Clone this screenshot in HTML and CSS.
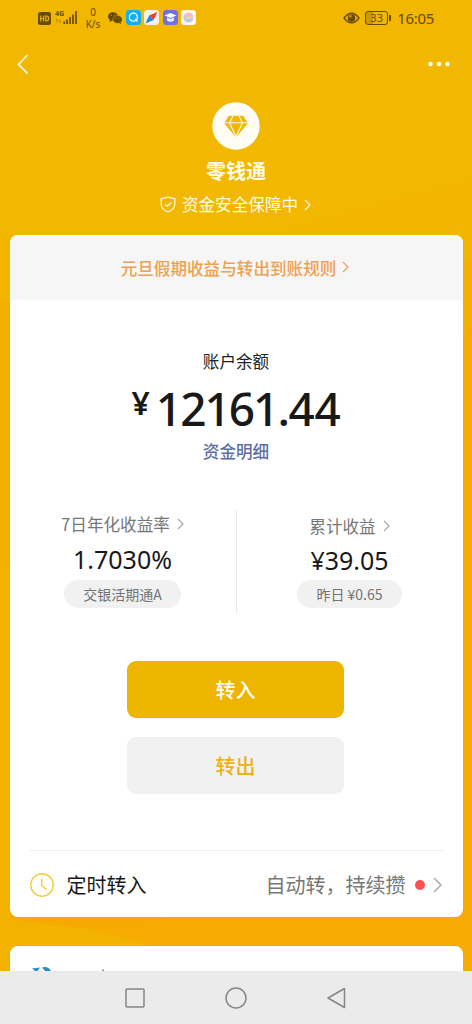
FILE: index.html
```html
<!DOCTYPE html>
<html lang="zh-CN">
<head>
<meta charset="utf-8">
<title>零钱通</title>
<link rel="stylesheet" href="styles.css">
</head>
<body>
<div class="screen">
  <svg class="backdrop" viewBox="0 0 472 1024" preserveAspectRatio="none">
    <rect width="472" height="1024" fill="#f2b700"/>
    <path d="M270 235 L472 180 V340 L0 300 V235Z" fill="#f2b500"/>
    <path d="M0 300 L472 260 V1024 H0Z" fill="#f3b000"/>
    <path d="M472 325 V1024 H0 V850 L10 858Z" fill="#f7ab00"/>
    <path d="M0 560 L10 570 V850 L0 865Z" fill="#f3b200"/>
    <path d="M0 860 L10 850 V920 L78 927 L150 944 L160 1024 H0Z" fill="#f3b200"/>
    <path d="M10 917 H190 L75 928Z" fill="#f6aa00"/>
  </svg>

  <div class="statusbar">
    <div class="status-left">
      <svg class="ico-hd" viewBox="0 0 13 13"><rect width="13" height="13" rx="2.5" fill="#664a00"/><path d="M2.7 3.5v6M5.7 3.5v6M2.7 6.5h3M7.8 4v5h.8q2 0 2-2.5T8.600 4z" fill="none" stroke="#f2b700" stroke-width="1.1"/></svg>
      <div class="network"><span class="net-type">4G</span>
        <svg class="ico-bars" viewBox="0 0 23 14"><path d="M2 9v4M1 10l1-1M5 9v4l1-1" stroke="#b78c00" fill="none"/><path d="M9.200 11.500v2.500M12 9.500v4.500M15 7v7M18 4.500v9.500M21 1v13" stroke="#664a00" stroke-width="1.700"/></svg>
      </div>
      <div class="speed"><span>0</span><span>K/s</span></div>
      <svg class="ico-wechat" viewBox="0 0 14 12"><ellipse cx="5" cy="4.500" rx="5" ry="4.300" fill="#664a00"/><path d="M2 7l-.5 3 3-1.500z" fill="#664a00"/><ellipse cx="9.500" cy="7.500" rx="4.700" ry="3.900" fill="#664a00" stroke="#f2b700" stroke-width=".5"/><path d="M11 11l2 1-.3-2z" fill="#664a00"/><g fill="#c59500"><circle cx="3.500" cy="3.300" r=".6"/><circle cx="6.700" cy="3.300" r=".6"/><circle cx="8" cy="6.600" r=".5"/><circle cx="11" cy="6.600" r=".5"/></g></svg>
      <svg class="ico-app" viewBox="0 0 15 15"><rect width="15" height="15" rx="3.500" fill="#12aef0"/><circle cx="7.400" cy="7.200" r="4" fill="none" stroke="#fff" stroke-width="1.300"/><path d="M9 9l2.500 2.500" stroke="#fff" stroke-width="1.300"/></svg>
      <svg class="ico-app" viewBox="0 0 15 15"><rect width="15" height="15" rx="3.500" fill="#f5f3ee"/><path d="M13.500 2 5 5.500l4.500 4.500z" fill="#ee3d35"/><path d="M1.500 13.500 5 5.500 9.500 10z" fill="#2383dc"/></svg>
      <svg class="ico-app" viewBox="0 0 15 15"><rect width="15" height="15" rx="3.500" fill="#6c72df"/><path d="M1.500 5.500 7.500 3l6 2.500-6 2.500z" fill="#fff"/><path d="M4 7.500l3.500 1.500L11 7.500v3q-3.500 2.500-7 0z" fill="#edf0ff"/></svg>
      <svg class="ico-app" viewBox="0 0 15 15"><rect width="15" height="15" rx="3.500" fill="#fff7f4"/><path d="M2.500 8a5 5 0 0 1 10-1z" fill="#f6bdbb"/><path d="M2.500 7q4-2 10 1a5 5 0 0 1-10-1z" fill="#b9c7ee"/><path d="M4 8q4 3 7-1-4-2-7 1z" fill="#f5d5a5"/></svg>
    </div>
    <div class="status-right">
      <svg class="ico-eye" viewBox="0 0 17 12"><path d="M1 6q7.500-9.500 15 0-7.500 9.500-15 0z" fill="none" stroke="#664a00" stroke-width="1.300"/><circle cx="8.500" cy="6" r="3.800" fill="#664a00"/><path d="M8.500 5.500V2.500a3 3 0 0 0-2.500 3z" fill="#d39e00"/></svg>
      <div class="battery"><span class="battery-box">33</span><span class="battery-tip"></span></div>
      <span class="clock">16:05</span>
    </div>
  </div>

  <div class="navbar">
    <svg class="ico-back" viewBox="0 0 12 21"><path d="M10.500 1 1.500 10.500l9 9" fill="none" stroke="#fff6d8" stroke-width="1.800"/></svg>
    <svg class="ico-more" viewBox="0 0 22 6"><g fill="#fffbe8"><circle cx="2.500" cy="3" r="2.300"/><circle cx="11" cy="3" r="2.300"/><circle cx="19.500" cy="3" r="2.300"/></g></svg>
  </div>

  <header class="hero">
    <svg class="logo" viewBox="0 0 48 48"><circle cx="24" cy="24" r="23.700" fill="#fffdf3"/><path d="M17 13.800h14l5 7.200-12 14.500L12 21z" fill="#f0b706"/><path d="M12 20.700h24M21 14l-3.500 6.700L24 35l6.500-14.300L27 14" fill="none" stroke="#fffdf3" stroke-width="1.100"/></svg>
    <h1 class="title">零钱通</h1>
    <div class="security">
      <svg class="ico-shield" viewBox="0 0 16 17"><path d="M8 1q3.500 1.500 6.800 1.500v6Q14.300 13.500 8 16 1.700 13.500 1.200 8.500v-6Q4.500 2.500 8 1z" fill="none" stroke="#fffbe9" stroke-width="1.200"/><path d="M5 8.200l2.200 2L11.500 6.500" fill="none" stroke="#fffbe9" stroke-width="1.200"/></svg>
      <span>资金安全保障中</span>
      <svg class="chev" viewBox="0 0 7 12"><path d="M1 1l5 5-5 5"/></svg>
    </div>
  </header>

  <main class="card">
    <div class="notice"><span>元旦假期收益与转出到账规则</span><svg class="chev" viewBox="0 0 7 12"><path d="M1 1l5 5-5 5"/></svg></div>
    <section class="balance">
      <div class="label">账户余额</div>
      <div class="amount"><span class="yen">¥</span><span class="num">12161<span class="cents"><span class="point">.</span>44</span></span></div>
      <div class="detail">资金明细</div>
    </section>
    <section class="stats">
      <div class="stat stat-rate">
        <div class="stat-name"><span>7日年化收益率</span><svg class="chev" viewBox="0 0 7 12"><path d="M1 1l5 5-5 5"/></svg></div>
        <div class="stat-value">1.7030%</div>
        <div class="pill">交银活期通A</div>
      </div>
      <div class="stat stat-total">
        <div class="stat-name"><span>累计收益</span><svg class="chev" viewBox="0 0 7 12"><path d="M1 1l5 5-5 5"/></svg></div>
        <div class="stat-value">¥39.05</div>
        <div class="pill">昨日 ¥0.65</div>
      </div>
    </section>
    <div class="actions">
      <div class="btn btn-in">转入</div>
      <div class="btn btn-out">转出</div>
    </div>
    <div class="schedule">
      <svg class="ico-clock" viewBox="0 0 24 24"><circle cx="12" cy="12" r="11.200"/><path d="M11.700 5.500v7l4.800 4.300"/></svg>
      <span class="schedule-name">定时转入</span>
      <span class="schedule-hint">自动转，持续攒</span>
      <span class="dot"></span>
      <svg class="chev" viewBox="0 0 9 16"><path d="M1 1l7 7-7 7"/></svg>
    </div>
  </main>

  <div class="card-next">
    <svg class="ico-peek" viewBox="0 0 80 5"><path d="M0 2.500 8 1.500 5.500 5H3zM10 1.500q6-2 9 3.500h-6z" fill="#2c8cc4"/><path d="M71 3.500v1.500" stroke="#555" stroke-width="1.300"/></svg>
  </div>

  <footer class="sysnav">
    <svg viewBox="0 0 22 22"><rect x="2" y="2" width="18" height="18" rx="1"/></svg>
    <svg viewBox="0 0 22 22"><circle cx="11" cy="11" r="10"/></svg>
    <svg viewBox="0 0 22 22"><path d="M18.500 1.500v19L2 11z"/></svg>
  </footer>
</div>
</body>
</html>
```
FILE: styles.css
```css
* { box-sizing: border-box; }
body { margin: 0; font-family: "Noto Sans CJK SC", sans-serif; }
svg { display: block; flex: none; }
.screen { position: relative; width: 472px; height: 1024px; overflow: hidden; display: flex; flex-direction: column; isolation: isolate; }
.backdrop { position: absolute; inset: 0; width: 472px; height: 1024px; z-index: -1; }

.statusbar { height: 38px; flex: none; display: flex; justify-content: space-between; padding: 0 38px 0 38px; color: #664a00; font-family: "Noto Sans", sans-serif; }
.status-left { display: flex; align-items: flex-start; }
.ico-hd { width: 13px; height: 13px; margin-top: 12px; }
.network { width: 23px; margin: 10px 0 0 4px; position: relative; }
.net-type { position: absolute; left: 0; top: 0; font-size: 7px; line-height: 8px; font-weight: 700; }
.ico-bars { width: 23px; height: 14px; }
.speed { width: 20px; margin: 6px 0 0 5px; display: flex; flex-direction: column; align-items: center; font-size: 10px; line-height: 12px; }
.ico-wechat { width: 14px; height: 12px; margin: 12px 4px 0 5px; }
.ico-app { width: 15px; height: 15px; margin: 10px 3.300px 0 0; }
.status-right { display: flex; align-items: center; padding-bottom: 2px; }
.ico-eye { width: 17px; height: 12px; margin-right: 5px; }
.battery { display: flex; align-items: center; margin-right: 6px; }
.battery-box { width: 23px; height: 14px; border: 1.500px solid #664a00; border-radius: 3px; font-size: 11px; line-height: 12px; text-align: center; background: linear-gradient(90deg, #c89900 0 35%, transparent 35%); }
.battery-tip { width: 2px; height: 6px; background: #664a00; margin-left: 1px; }
.clock { font-size: 15px; line-height: 18px; letter-spacing: -.3px; }

.navbar { height: 52px; flex: none; display: flex; align-items: center; justify-content: space-between; padding: 0 22px 0 17px; }
.ico-back { width: 12px; height: 21px; }
.ico-more { width: 22px; height: 6px; }

.hero { height: 145px; flex: none; display: flex; flex-direction: column; align-items: center; padding-top: 12px; color: #fffbe9; }
.logo { width: 48px; height: 48px; }
.title { margin: 7px 0 0; font-size: 20px; line-height: 28px; font-weight: 700; }
.security { display: flex; align-items: center; margin: 9px 0 0 -1px; font-size: 16.600px; line-height: 24px; }
.security span { margin: -2px 6px 0; }
.ico-shield { width: 16px; height: 17px; margin-top: -1px; }
.chev { width: 7px; height: 12px; fill: none; stroke: currentColor; stroke-width: 1.200; }
.security .chev { width: 7px; margin-top: -1px; }

.card { width: 453px; height: 682px; flex: none; margin-left: 9.500px; background: #fff; border-radius: 8px; overflow: hidden; display: flex; flex-direction: column; }
.notice { height: 65px; flex: none; background: #f6f6f6; color: #eea04e; display: flex; align-items: center; justify-content: center; padding-right: 2px; font-size: 16.600px; font-weight: 500; gap: 6px; }
.notice .chev { margin-top: -1px; }
.balance { display: flex; flex-direction: column; align-items: center; padding-top: 49px; }
.label { font-size: 16.600px; line-height: 24px; color: #222; }
.amount { display: flex; height: 60px; margin-top: 5px; font-family: "Noto Sans", sans-serif; font-weight: 500; color: #191919; }
.yen { font-size: 32px; line-height: 50px; font-weight: 600; margin-right: 6px; }
.num { font-size: 46px; line-height: 60px; letter-spacing: -2px; }
.cents { letter-spacing: -.3px; }
.point { letter-spacing: -1.500px; }
.detail { font-size: 16.600px; line-height: 24px; font-weight: 500; color: #5e6f9f; margin-top: 1px; }
.stats { display: grid; grid-template-columns: 227px 226px; height: 103px; margin-top: 47px; flex: none; }
.stat { display: flex; flex-direction: column; align-items: center; }
.stat-rate { border-right: 1px solid #e9e9e9; }
.stat-name { display: flex; align-items: center; gap: 7px; height: 28px; font-size: 16.600px; line-height: 24px; color: #777; }
.stat-total .stat-name { height: 32px; }
.stat-name .chev { color: #aaa; }
.stat-value { font-family: "Noto Sans", sans-serif; font-size: 25px; line-height: 34px; color: #191919; height: 34px; margin-top: 4px; }
.stat-total .stat-value { margin-top: 1px; }
.pill { height: 28px; margin-top: 4px; padding: 0 19px; border-radius: 14px; background: #f1f1f1; color: #737373; font-size: 14px; line-height: 28px; }
.stat-total .pill { margin-top: 3px; }
.actions { display: flex; flex-direction: column; gap: 19px; align-items: center; margin-top: 47.500px; }
.btn { width: 217px; height: 57px; margin-right: 1px; border-radius: 9px; font-size: 20px; line-height: 58px; text-align: center; font-weight: 500; }
.btn-in { background: #edb500; color: #fffdf3; }
.btn-out { background: #f1f1f1; color: #edb116; }
.schedule { height: 67px; margin: auto 19px 0; border-top: 1px solid #f0f0f0; display: flex; align-items: center; padding: 1px 2px 0 1px; }
.ico-clock { width: 24px; height: 24px; fill: none; stroke: #f0ce38; stroke-width: 1.400; }
.schedule-name { font-size: 20px; color: #191919; margin-left: 13px; }
.schedule-hint { font-size: 20px; color: #777; margin-left: auto; }
.dot { width: 10px; height: 10px; border-radius: 50%; background: #fa5151; margin: 0 8px 0 9px; }
.schedule .chev { width: 9px; height: 16px; color: #aaa; stroke-width: 1.500; }

.card-next { width: 453px; height: 25px; flex: none; margin: 29px 0 0 9.500px; background: #fff; border-radius: 8px 8px 0 0; padding: 20px 0 0 22px; }
.ico-peek { width: 80px; height: 5px; }
.sysnav { height: 53px; flex: none; background: #ebebeb; display: flex; justify-content: center; gap: 79px; padding: 16px 1px 0 0; }
.sysnav svg { width: 22px; height: 22px; fill: none; stroke: #868686; stroke-width: 1.500; stroke-linejoin: round; }
```
